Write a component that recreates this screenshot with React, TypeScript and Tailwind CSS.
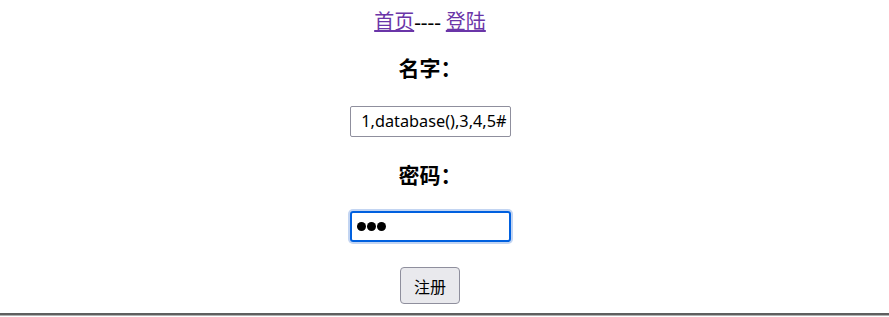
export default function App() {
  return (
    <div className="w-[889px] h-[317px] bg-white flex flex-col overflow-hidden" style={{ fontFamily: '"Liberation Serif", "Noto Sans CJK SC", serif' }}>
      <div className="w-[860px] flex flex-col items-center">
        <p className="mt-[10px] h-[24px] leading-[24px] text-[20px] text-black whitespace-pre">
          <a href="#" className="text-[#6a35a8] underline">首页</a>---- <a href="#" className="text-[#6a35a8] underline">登陆</a>
        </p>
        <h3 className="mt-[23px] h-[24px] leading-[24px] text-[21px] font-bold text-black">名字：</h3>
        <div className="mt-[25px] w-[161px] h-[31px] border border-[#8f8f9d] rounded-[2px] flex items-center justify-end pr-[3px] overflow-hidden">
          <span className="text-[16.3px] text-black whitespace-nowrap" style={{ fontFamily: '"Noto Sans", "Open Sans", sans-serif' }}>1,database(),3,4,5#</span>
        </div>
        <h3 className="mt-[27px] h-[24px] leading-[24px] text-[21px] font-bold text-black">密码：</h3>
        <div className="mt-[23px] w-[161px] h-[31px] border-2 border-[#0060df] rounded-[3px] ring-2 ring-[#c3d5f2] flex items-center pl-[5px] gap-[1px]">
          <span className="w-[9px] h-[9px] rounded-full bg-black" />
          <span className="w-[9px] h-[9px] rounded-full bg-black" />
          <span className="w-[9px] h-[9px] rounded-full bg-black" />
        </div>
        <button className="mt-[25px] w-[60px] h-[37px] bg-[#e9e9ed] border border-[#8f8f9d] rounded-[4px] text-[16px] text-black" style={{ fontFamily: '"Noto Sans CJK SC", sans-serif' }}>注册</button>
      </div>
      <div className="mt-[9px] w-full h-[2px] bg-[#5f5f5f]" />
      <div className="w-full h-[1px] bg-[#b0b0b0]" />
    </div>
  );
}
